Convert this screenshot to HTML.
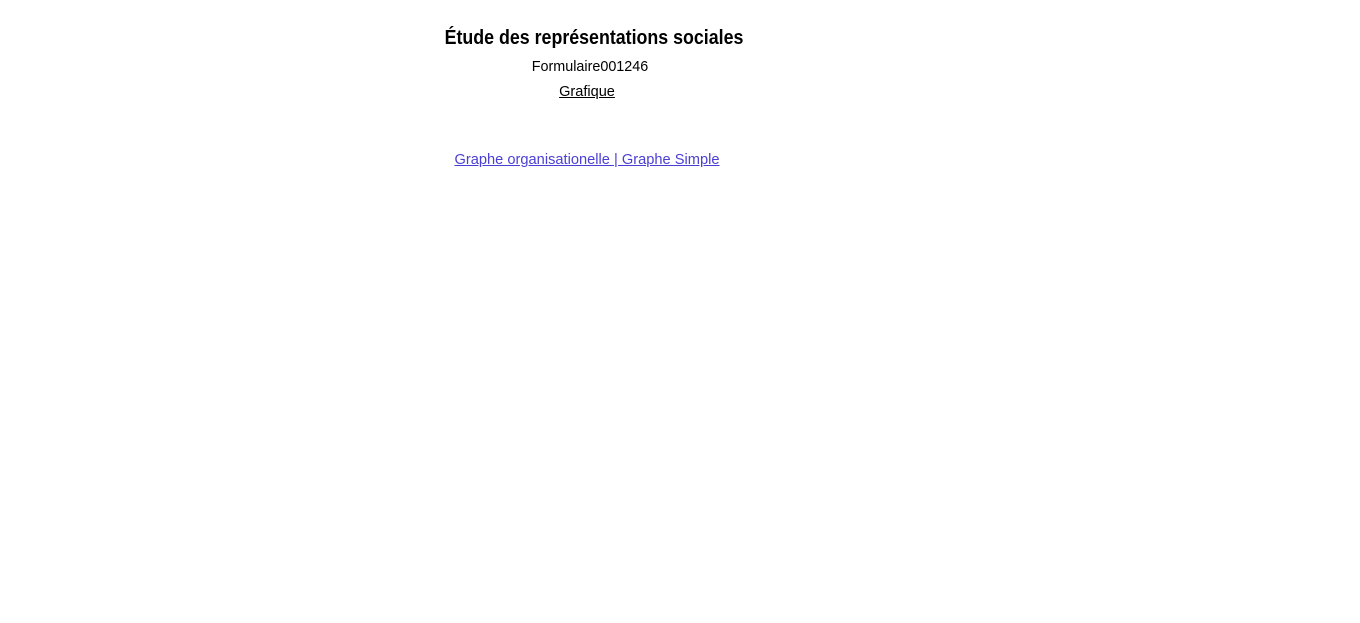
<!DOCTYPE html>
<html><head><meta charset="utf-8"><style>
body{margin:0;width:1360px;height:623px;background:#fff;font-family:"Liberation Sans",sans-serif;position:relative;overflow:hidden}
.t{position:absolute;white-space:nowrap;transform-origin:center center;text-align:center}
</style></head><body>
<div class="t" style="left:394px;width:400px;top:27px;font-size:20px;font-weight:bold;transform:scaleX(0.89)">Étude des représentations sociales</div>
<div class="t" style="left:490px;width:200px;top:58px;font-size:15px;transform:scaleX(0.957)">Formulaire001246</div>
<div class="t" style="left:537px;width:100px;top:83px;font-size:15px;text-decoration:underline;transform:scaleX(0.97)">Grafique</div>
<div class="t" style="left:387px;width:400px;top:151px;font-size:15px;color:#4a3fd4;text-decoration:underline;transform:scaleX(0.976)">Graphe organisationelle | Graphe Simple</div>
</body></html>
